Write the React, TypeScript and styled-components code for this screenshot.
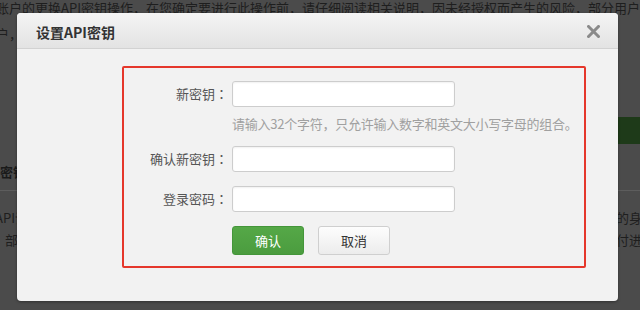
import React from "react";
import styled, { createGlobalStyle } from "styled-components";

const Global = createGlobalStyle`
  html, body { margin: 0; padding: 0; background: #4b4b4b; }
  body { font-family: "Noto Sans CJK SC", "Noto Sans", sans-serif; text-spacing-trim: space-all; }
  * { box-sizing: border-box; }
`;

const Stage = styled.div`
  position: relative;
  width: 640px;
  height: 310px;
  overflow: hidden;
  background: #4b4b4b;
`;

const Page = styled.div`
  display: flex;
  flex-direction: column;
  width: 640px;
  color: #1e1e1e;
  font-size: 13px;
`;

const Intro = styled.p`
  margin: -5px 0 0 -4px;
  line-height: 26px;
  white-space: nowrap;
`;

const BarRow = styled.div`
  display: flex;
  justify-content: flex-end;
  margin-top: 70px;
`;

const GreenBlock = styled.div`
  width: 140px;
  height: 27px;
  background: #1e3a19;
`;

const SectionTitle = styled.h3`
  margin: 19px 0 0 0;
  font-size: 13px;
  font-weight: bold;
  line-height: 18px;
  color: #1a1a1a;
`;

const Divider = styled.div`
  margin-top: 9px;
  height: 1px;
  background: #5d5d5d;
`;

const TextRow = styled.div<{ $top: number }>`
  display: grid;
  grid-template-columns: 616px 1fr;
  margin-top: ${(p) => p.$top}px;
  line-height: 20px;
  white-space: nowrap;
  overflow: hidden;
`;

const Clip = styled.span<{ $shift?: number }>`
  overflow: hidden;
  margin-left: ${(p) => p.$shift ?? 0}px;
`;

const Modal = styled.div`
  position: absolute;
  left: 17px;
  top: 13px;
  width: 601px;
  height: 288px;
  background: #f2f2f2;
  border-radius: 4px;
  overflow: hidden;
  box-shadow: 0 1px 3px rgba(0, 0, 0, 0.35);
  display: flex;
  flex-direction: column;
`;

const Header = styled.div`
  height: 36px;
  flex: none;
  display: flex;
  align-items: center;
  justify-content: space-between;
  padding: 2px 18px 0 19px;
  background: linear-gradient(#f4f4f4, #e3e3e3);
  border-bottom: 1px solid #d2d2d2;
`;

const Title = styled.h2`
  margin: 0;
  font-size: 14px;
  font-weight: bold;
  color: #333;
`;

const CloseBtn = styled.button`
  border: 0;
  padding: 0;
  background: none;
  width: 13px;
  height: 13px;
  display: flex;
  cursor: pointer;
`;

const Body = styled.div`
  flex: 1;
  padding: 17px 32px 0 105px;
`;

const Frame = styled.div`
  width: 464px;
  border: 2px solid #e5372b;
  border-radius: 2px;
  padding: 13px 0 11px 0;
  display: flex;
  flex-direction: column;
  gap: 14px;
`;

const Row = styled.div`
  display: grid;
  grid-template-columns: 104px 223px;
  column-gap: 4px;
  align-items: start;
`;

const Label = styled.label`
  font-size: 13px;
  line-height: 26px;
  color: #555;
  text-align: right;
  white-space: nowrap;
`;

const Colon = styled.span`
  display: inline-block;
  width: 13px;
  text-align: center;
  font-family: "Noto Sans CJK TC", "Noto Sans CJK SC", sans-serif;
`;

const Field = styled.div`
  display: flex;
  flex-direction: column;
`;

const Input = styled.input`
  width: 223px;
  height: 26px;
  border: 1px solid #cdcdcd;
  border-radius: 3px;
  background: #fff;
  box-shadow: inset 0 1px 2px rgba(0, 0, 0, 0.06);
  outline: none;
  padding: 0 6px;
  font-size: 13px;
`;

const Hint = styled.div`
  margin-top: 8px;
  font-size: 13px;
  line-height: 17px;
  color: #a0a0a0;
  white-space: nowrap;
  letter-spacing: -0.25px;
`;

const Buttons = styled.div`
  grid-column: 2;
  display: flex;
  gap: 14px;
`;

const Button = styled.button<{ $primary?: boolean }>`
  width: 72px;
  height: 29px;
  border-radius: 3px;
  font-family: "Noto Sans CJK SC", sans-serif;
  font-size: 13px;
  cursor: pointer;
  border: 1px solid ${(p) => (p.$primary ? "#44963a" : "#cfcfcf")};
  background: ${(p) =>
    p.$primary ? "linear-gradient(#55a847, #4b9c3f)" : "linear-gradient(#fdfdfd, #ececec)"};
  color: ${(p) => (p.$primary ? "#fff" : "#333")};
`;

export default function App() {
  return (
    <>
      <Global />
      <Stage>
        <Page>
          <Intro>
            账户的更换API密钥操作，在您确定要进行此操作前，请仔细阅读相关说明，因未经授权而产生的风险，部分用户会因此需要重新设置的API
            <br />
            户，请妥善保管您的密钥信息
          </Intro>
          <BarRow>
            <GreenBlock />
          </BarRow>
          <SectionTitle>密钥设置</SectionTitle>
          <Divider />
          <TextRow $top={17}>
            <Clip $shift={-5}>API请求时需要使用密钥进行签名验证</Clip>
            <Clip>的身份验证</Clip>
          </TextRow>
          <TextRow $top={2}>
            <Clip $shift={5}>部分接口需要密钥</Clip>
            <Clip>付进行</Clip>
          </TextRow>
        </Page>
        <Modal>
          <Header>
            <Title>设置API密钥</Title>
            <CloseBtn aria-label="关闭">
              <svg width="13" height="13" viewBox="0 0 13 13">
                <path
                  d="M1.5 1.5 L11.5 11.5 M11.5 1.5 L1.5 11.5"
                  stroke="#8a8a8a"
                  strokeWidth="3"
                  strokeLinecap="square"
                />
              </svg>
            </CloseBtn>
          </Header>
          <Body>
            <Frame>
              <Row>
                <Label>
                  新密钥<Colon>：</Colon>
                </Label>
                <Field>
                  <Input type="text" />
                  <Hint>请输入32个字符，只允许输入数字和英文大小写字母的组合。</Hint>
                </Field>
              </Row>
              <Row>
                <Label>
                  确认新密钥<Colon>：</Colon>
                </Label>
                <Field>
                  <Input type="text" />
                </Field>
              </Row>
              <Row>
                <Label>
                  登录密码<Colon>：</Colon>
                </Label>
                <Field>
                  <Input type="password" />
                </Field>
              </Row>
              <Row>
                <Buttons>
                  <Button $primary>确认</Button>
                  <Button>取消</Button>
                </Buttons>
              </Row>
            </Frame>
          </Body>
        </Modal>
      </Stage>
    </>
  );
}
